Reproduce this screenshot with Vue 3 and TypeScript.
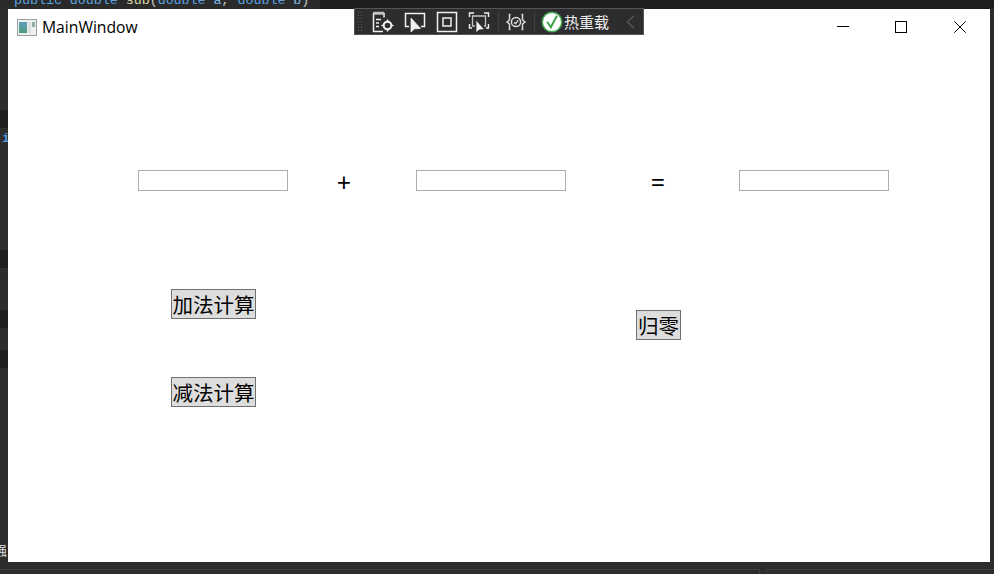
<template>
  <div class="desktop">
    <!-- IDE behind the window -->
    <div class="code-top">
      <span class="code-line"><span class="kw">public double</span> <span class="fn">sub</span>(<span class="kw">double</span> <span class="arg">a</span>, <span class="kw">double</span> <span class="arg">b</span>)</span>
    </div>
    <div
      v-for="top in bandTops"
      :key="top"
      class="band"
      :style="{ top: `${top}px` }"
    ></div>
    <span class="side-code">i</span>
    <span class="side-cjk">强</span>
    <div class="ide-bottom">
      <div class="panel-line left"></div>
      <div class="panel-line right"></div>
    </div>

    <div class="window">
      <div class="titlebar">
        <svg class="app-icon" width="20" height="17" viewBox="0 0 20 17">
          <defs>
            <linearGradient id="pane" x1="0" y1="0" x2="0" y2="1">
              <stop offset="0" stop-color="#5f9fc0" />
              <stop offset="1" stop-color="#4f9c78" />
            </linearGradient>
          </defs>
          <rect x="0.5" y="0.5" width="19" height="16" fill="#eef0f0" stroke="#9a9fa3" />
          <rect x="2" y="3" width="8" height="11" fill="url(#pane)" />
          <rect x="11" y="3" width="3" height="11" fill="#d8e2de" />
          <rect x="15" y="3" width="3" height="5" fill="#8fb0a8" />
        </svg>
        <span class="title">MainWindow</span>
        <div class="controls">
          <button class="ctl" aria-label="minimize">
            <svg width="12" height="12" viewBox="0 0 12 12"><path d="M0 5.5H12" stroke="#000" fill="none" /></svg>
          </button>
          <button class="ctl" aria-label="maximize">
            <svg width="12" height="12" viewBox="0 0 12 12"><rect x="0.5" y="0.5" width="11" height="11" stroke="#000" fill="none" /></svg>
          </button>
          <button class="ctl" aria-label="close">
            <svg width="12" height="12" viewBox="0 0 12 12"><path d="M0.3 0.3L11.7 11.7M11.7 0.3L0.3 11.7" stroke="#000" fill="none" /></svg>
          </button>
        </div>

        <!-- WPF debug toolbar -->
        <div class="debug-bar">
          <div class="grip"></div>
          <svg class="tool" viewBox="0 0 24 24" fill="none" stroke="#f1f1f1">
            <path d="M12 21.5H2.5V3.5H13V7.5" stroke-width="1.5" />
            <path d="M2.5 3.2H13" stroke-width="2.8" stroke="#c4c4c4" />
            <path d="M5 9.5H10M5 13H8M5 16.5H8" stroke-width="1.4" />
            <circle cx="16.5" cy="15.5" r="3.8" stroke-width="2" />
            <path d="M16.5 9.5V11.5M16.5 19.5V21.5M10.5 15.5H12.5M20.5 15.5H22.5" stroke-width="1.6" />
          </svg>
          <svg class="tool" viewBox="0 0 24 24" fill="none" stroke="#f1f1f1">
            <path d="M6 16.5H2.5V3.5H21.5V16.5H18" stroke-width="1.5" />
            <path d="M8 8L8 22L11.5 18.8L17.5 18.5Z" fill="#f1f1f1" stroke="#f1f1f1" stroke-width="0.8" />
          </svg>
          <svg class="tool" viewBox="0 0 24 24" fill="none" stroke="#f1f1f1">
            <rect x="2.5" y="2.5" width="19" height="19" stroke-width="1.5" />
            <rect x="8" y="8" width="8" height="8" stroke-width="1.5" />
          </svg>
          <svg class="tool" viewBox="0 0 24 24" fill="none" stroke="#f1f1f1">
            <path d="M2.5 7V3H7M17 3H21.5V7M2.5 14V18H5M19 18H21.5V14" stroke-width="1.4" />
            <path d="M8 16H5.5V6H18.5V16H17" stroke-width="1.3" stroke="#c4c4c4" />
            <path d="M9 10L9 23L12 20L17.5 19.5Z" fill="#f1f1f1" stroke="#2d2d30" stroke-width="0.8" />
          </svg>
          <div class="sep first"></div>
          <svg class="tool bind" viewBox="0 0 24 24" fill="none" stroke="#dcdcdc">
            <path d="M6.5 4.5H5.5V10L3 12L5.5 14V19.5H6.5M17.5 4.5H18.5V10L21 12L18.5 14V19.5H17.5" stroke-width="1.5" />
            <circle cx="12" cy="12" r="4.6" stroke-width="1.5" />
            <path d="M10 12.2L11.5 13.7L14.2 10.4" stroke-width="1.4" />
          </svg>
          <div class="sep second"></div>
          <svg class="check" width="22" height="22" viewBox="0 0 22 22">
            <circle cx="11" cy="11" r="9.8" fill="#fff" stroke="#3fa34d" stroke-width="1.5" />
            <path d="M6.2 10.8L9.8 16.2L16 4.8" fill="none" stroke="#3fa34d" stroke-width="2" />
          </svg>
          <span class="reload">热重载</span>
          <svg class="chevron" width="9" height="14" viewBox="0 0 9 14"><path d="M8 0.8L1.5 7L8 13.2" fill="none" stroke="#5a5a5a" stroke-width="1.2" /></svg>
        </div>
      </div>

      <div class="calc-row">
        <input v-model="first" class="field" />
        <span class="op plus">+</span>
        <input v-model="second" class="field" />
        <span class="op equals">=</span>
        <input v-model="result" class="field" />
      </div>

      <div class="action-row">
        <div class="action-col">
          <button class="action wide">加法计算</button>
          <button class="action wide">减法计算</button>
        </div>
        <button class="action reset">归零</button>
      </div>
    </div>
  </div>
</template>

<script setup lang="ts">
import { ref } from 'vue'

const bandTops: number[] = [110, 250, 310, 350]

const first = ref('')
const second = ref('')
const result = ref('')
</script>

<style scoped>
.desktop {
  position: relative;
  width: 994px;
  height: 574px;
  overflow: hidden;
  background: #2d2d2d;
}

.code-top {
  position: absolute;
  left: 0;
  top: 0;
  width: 994px;
  height: 9px;
  overflow: hidden;
  background: linear-gradient(to right, #2a2a2a 320px, #1e1e1e 320px);
}

.code-line {
  position: absolute;
  left: 14px;
  top: -7px;
  font: 13.3px/16px "Liberation Mono", monospace;
  color: #c8c8c8;
  white-space: pre;
}

.kw { color: #5ba3e0; }
.fn { color: #dcdcaa; }
.arg { color: #7fb8e6; }

.band {
  position: absolute;
  left: 0;
  width: 8px;
  height: 18px;
  background: #1e1e1e;
}

.side-code {
  position: absolute;
  left: 2px;
  top: 131px;
  width: 6px;
  overflow: hidden;
  font: 700 13px/16px "Liberation Mono", monospace;
  color: #4f9ae0;
}

.side-cjk {
  position: absolute;
  left: -6px;
  top: 542px;
  font: 13px/16px "Noto Sans CJK SC", sans-serif;
  color: #dcdcdc;
  clip-path: inset(0 0 0 6px);
}

.ide-bottom {
  position: absolute;
  left: 0;
  top: 562px;
  width: 994px;
  height: 12px;
  display: flex;
  justify-content: space-between;
}

.panel-line {
  height: 12px;
  margin-top: 7px;
  border-top: 1px solid #3d3d3d;
}

.panel-line.left { width: 759px; border-right: 1px solid #3d3d3d; }
.panel-line.right { width: 227px; border-left: 1px solid #3d3d3d; }

.window {
  position: absolute;
  left: 8px;
  top: 9px;
  width: 982px;
  height: 553px;
  background: #fff;
}

.titlebar {
  position: relative;
  display: flex;
  align-items: center;
  height: 36px;
  padding-left: 9px;
}

.app-icon {
  margin-top: 1px;
  flex: none;
}

.title {
  margin-left: 5px;
  font: 15.7px/20px "Open Sans", sans-serif;
  color: #000;
}

.controls {
  display: flex;
  margin-left: auto;
  margin-right: 1px;
}

.ctl {
  display: flex;
  align-items: center;
  justify-content: center;
  width: 58.5px;
  height: 36px;
  padding: 0;
  border: 0;
  background: transparent;
}

.debug-bar {
  position: absolute;
  left: 346px;
  top: -1px;
  width: 290px;
  height: 27px;
  box-sizing: border-box;
  display: flex;
  align-items: center;
  border: 1px solid #555;
  background: #2d2d30;
}

.grip {
  width: 6px;
  height: 21px;
  margin-left: 2px;
  background-image: radial-gradient(#5a5a5a 0.7px, transparent 0.8px);
  background-size: 3px 3px;
}

.tool {
  flex: none;
  width: 24px;
  height: 24px;
  margin-right: 8px;
}

.tool:first-of-type {
  margin-left: 8px;
}

.sep {
  flex: none;
  width: 1px;
  height: 21px;
  background: #3f3f42;
}

.sep.first {
  margin-left: -1px;
  margin-right: 5px;
}

.sep.second {
  margin-left: -2px;
  margin-right: 6px;
}

.check {
  flex: none;
}

.reload {
  margin-left: 1px;
  font: 15px/20px "Noto Sans CJK SC", sans-serif;
  color: #f1f1f1;
  white-space: nowrap;
}

.chevron {
  margin-left: 17px;
  flex: none;
}

.calc-row {
  display: flex;
  align-items: flex-start;
  height: 21px;
  margin-top: 125px;
  padding-left: 130px;
}

.field {
  width: 150px;
  height: 21px;
  box-sizing: border-box;
  padding: 0 2px;
  border: 1px solid #abadb3;
  outline: none;
  background: #fff;
}

.op {
  width: 16px;
  height: 21px;
  font: 25px/24px "Noto Sans", sans-serif;
  text-align: center;
  color: #000;
}

.plus {
  margin-left: 48px;
  margin-right: 64px;
}

.equals {
  margin-left: 84px;
  margin-right: 73px;
}

.action-row {
  display: flex;
  align-items: flex-start;
  margin-top: 98px;
  padding-left: 163px;
}

.action-col {
  display: flex;
  flex-direction: column;
  gap: 58px;
}

.action {
  height: 30px;
  box-sizing: border-box;
  padding: 0;
  border: 1px solid #707070;
  background: #dddddd;
  font: 20.5px/28px "Noto Sans CJK SC", sans-serif;
  color: #000;
  white-space: nowrap;
}

.wide {
  width: 85px;
}

.reset {
  width: 45px;
  margin-left: 380px;
  margin-top: 21px;
}
</style>

<style>
html,
body {
  background: #2d2d2d;
}
</style>
